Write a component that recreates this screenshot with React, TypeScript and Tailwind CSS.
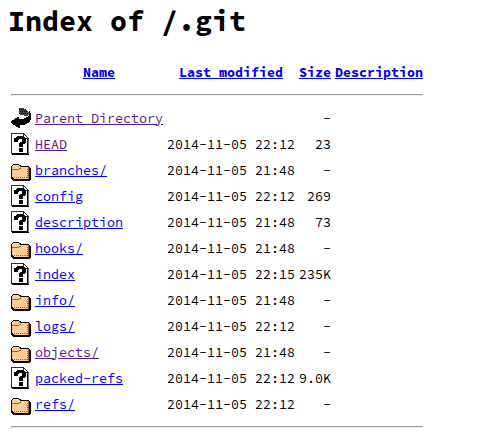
import React from "react";

type Kind = "back" | "unknown" | "folder";

type Entry = {
  kind: Kind;
  name: string;
  modified?: string;
  size: string;
  visited?: boolean;
};

const entries: Entry[] = [
  { kind: "back", name: "Parent Directory", size: "-", visited: true },
  { kind: "unknown", name: "HEAD", modified: "2014-11-05 22:12", size: "23", visited: true },
  { kind: "folder", name: "branches/", modified: "2014-11-05 21:48", size: "-" },
  { kind: "unknown", name: "config", modified: "2014-11-05 22:12", size: "269" },
  { kind: "unknown", name: "description", modified: "2014-11-05 21:48", size: "73" },
  { kind: "folder", name: "hooks/", modified: "2014-11-05 21:48", size: "-" },
  { kind: "unknown", name: "index", modified: "2014-11-05 22:15", size: "235K" },
  { kind: "folder", name: "info/", modified: "2014-11-05 21:48", size: "-" },
  { kind: "folder", name: "logs/", modified: "2014-11-05 22:12", size: "-" },
  { kind: "folder", name: "objects/", modified: "2014-11-05 21:48", size: "-", visited: true },
  { kind: "unknown", name: "packed-refs", modified: "2014-11-05 22:12", size: "9.0K" },
  { kind: "folder", name: "refs/", modified: "2014-11-05 22:12", size: "-" },
];

function Icon({ kind }: { kind: Kind }) {
  return (
    <svg className="block h-[22px] w-5" viewBox="0 0 20 22" shapeRendering="crispEdges">
      {kind === "back" && (
        <>
          <path fill="#444" d="M8 1h5v1h2v1h1v1h1v1h1v3h-1v1h-4V8H9V7H8z" />
          <path stroke="#000" strokeDasharray="1 1" d="M8 2.5h7M9 4.5h8M8 6.5h9" />
          <path d="M18 4h1v2h1v7h-1v2h-1v1h-2v1h-2v1h-5v1H9v2H7v-1H5v-1H4v-1H2v-1H1v-1H0v-2h1v-1h2v-1h1v-1h2v-1h2v2h5v-1h2v-1h2V9h1z" />
        </>
      )}
      {kind === "unknown" && (
        <>
          <path fill="#fff" d="M0 0h12l5 5v16H0z" />
          <path fill="#333" d="M0 0h12v1H1v20H0z" />
          <path d="M1 20h17v2H1zM16 6h1v15h-1z" />
          <path fill="#777" d="M17 6h1v15h-1z" />
          <path fill="#222" d="M11 0h2v1h1v1h1v1h1v1h1v1h1v1h-6V1h-1zM13 2v3h3V4h-1V3h-1V2z" fillRule="evenodd" />
          <path d="M6 3h6v1h2v1h1v5h-1v1h-2v3H8v-4h1V9h2V6H8v1H7v2H3V5h2V4h1zM8 15h4v4H8z" />
        </>
      )}
      {kind === "folder" && (
        <g transform="translate(0 1)">
          <path d="M2 4h6v1h2v1h8v1h1v1h1v12h-1v1h-1v1H3v-1H2v-1H1v-1H0V6h1V5h1z" />
          <path fill="#ffcc99" d="M2 5h6v1h1v1h9v12H3v-1H2v-1H1V6h1z" />
          <path fill="#996633" d="M1 9h7V8h2V7h8v1h-8v1H8v1H1zM17 8h1v11h-1z" />
          <path fill="#ffcc99" d="M10 7h7v1h-7z" />
          <path stroke="#996633" strokeDasharray="1 1" d="M3 17.5h14M16.5 9v9" />
        </g>
      )}
    </svg>
  );
}

function Rule() {
  return (
    <tr>
      <th colSpan={5} className="p-px">
        <hr className="my-[7px] h-[2px] border border-[#9a9a9a] border-r-[#eee] border-b-[#eee]" />
      </th>
    </tr>
  );
}

const head = "px-px pt-px pb-[3px] text-center font-bold leading-[17px]";
const link = "text-[#0000ee] underline";

export default function App() {
  return (
    <main className="h-[437px] overflow-hidden bg-white px-2 font-['Source_Code_Pro','Noto_Sans_Mono_CJK_SC',monospace] text-[13.333px] text-black">
      <h1 className="pt-[3px] text-[28.333px] leading-9 font-bold">Index of /.git</h1>
      <table className="mt-[22px] table-fixed border-separate border-spacing-[2px]">
        <colgroup>
          <col className="w-[22px]" />
          <col className="w-[130px]" />
          <col className="w-[130px]" />
          <col className="w-[34px]" />
          <col className="w-[90px]" />
        </colgroup>
        <tbody>
          <tr>
            <th className={head} />
            <th className={head}><a className={link}>Name</a></th>
            <th className={head}><a className={link}>Last modified</a></th>
            <th className={head}><a className={link}>Size</a></th>
            <th className={head}><a className={link}>Description</a></th>
          </tr>
          <Rule />
          {entries.map((e) => (
            <tr key={e.name}>
              <td className="p-px"><Icon kind={e.kind} /></td>
              <td className="p-px leading-[17px] whitespace-nowrap">
                <a className={e.visited ? "text-[#551a8b] underline" : link}>{e.name}</a>
              </td>
              <td className="p-px text-right leading-[17px] whitespace-nowrap">{e.modified}</td>
              <td className="p-px text-right leading-[17px] whitespace-nowrap">{e.size}</td>
              <td />
            </tr>
          ))}
          <Rule />
        </tbody>
      </table>
    </main>
  );
}
